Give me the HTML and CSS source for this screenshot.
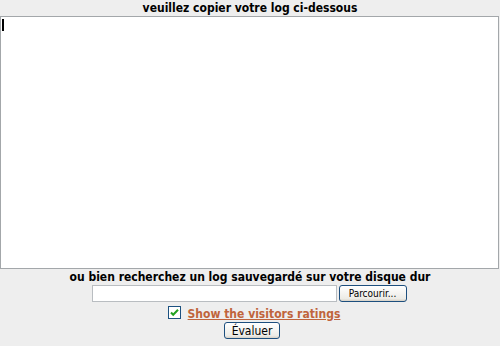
FILE: index.html
```html
<html>
<head>
<meta charset="UTF-8">
<title>Evaluer un log</title>
<link rel="stylesheet" href="styles.css">
</head>
<body>
	<form class="logForm">
		<div class="title">veuillez copier votre log ci-dessous</div>
		<div class="logBox">
			<textarea class="logText"></textarea>
			<span class="caret"></span>
		</div>
		<div class="title">ou bien recherchez un log sauvegardé sur votre disque dur</div>
		<div class="fileRow">
			<input class="fileName" type="text" />
			<button class="buttons browse" type="button">Parcourir...</button>
		</div>
		<div class="ratingRow">
			<span class="check">
				<svg width="13" height="13" viewBox="0 0 13 13">
					<rect x="0.5" y="0.5" width="12" height="12" fill="#fff" stroke="#1c5180"/>
					<path d="M3 6.5 L5.2 8.8 L10 3.8" fill="none" stroke="#21a121" stroke-width="2"/>
				</svg>
			</span>
			<a class="ratings" href="#">Show the visitors ratings</a>
		</div>
		<div class="submitRow">
			<button class="buttons submit" type="button">Évaluer</button>
		</div>
	</form>
</body>
</html>
```

FILE: styles.css
```css
body{
	margin: 0;
	background: #eeeeee;
	font-family: "DejaVu Sans Condensed", "DejaVu Sans", sans-serif;
	font-stretch: condensed;
	color: #000;
}
.logForm{
	margin: 0;
	text-align: center;
}
.title{
	font-weight: bold;
	font-size: 12px;
	height: 16px;
	line-height: 17px;
}
.logBox{
	position: relative;
	width: 499px;
}
.logText{
	display: block;
	box-sizing: border-box;
	width: 499px;
	height: 253px;
	margin: 0;
	border: 1px solid #a3a7aa;
	background: #fff;
	resize: none;
	outline: none;
}
.caret{
	position: absolute;
	left: 2px;
	top: 3px;
	width: 2px;
	height: 12px;
	background: #000;
}
.fileRow{
	display: flex;
	justify-content: center;
	gap: 2px;
	margin-top: 0;
	padding-right: 2px;
}
.fileName{
	box-sizing: border-box;
	width: 245px;
	height: 17px;
	border: 1px solid #b9bdc1;
	background: #fff;
	margin: 0;
}
.buttons{
	box-sizing: border-box;
	font-family: "DejaVu Sans Condensed", "DejaVu Sans", sans-serif;
	font-stretch: condensed;
	font-size: 11px;
	height: 17px;
	padding: 0 6px;
	border: 1px solid #1d4f7e;
	border-radius: 3px;
	background: linear-gradient(#ffffff, #ecebe6 85%, #d6d0c5);
	color: #000;
	line-height: 14px;
}
.browse{
	width: 68px;
	font-size: 10px;
}
.ratingRow{
	display: flex;
	justify-content: center;
	align-items: center;
	gap: 7px;
	margin-top: 4px;
	height: 16px;
	padding-left: 8px;
}
.check{
	display: flex;
	margin-top: -3px;
}
.ratings{
	color: #c0643c;
	font-weight: bold;
	font-size: 12px;
}
.submitRow{
	padding-left: 4px;
}
.submit{
	width: 56px;
	margin-top: 0;
	font-size: 12px;
}
```
